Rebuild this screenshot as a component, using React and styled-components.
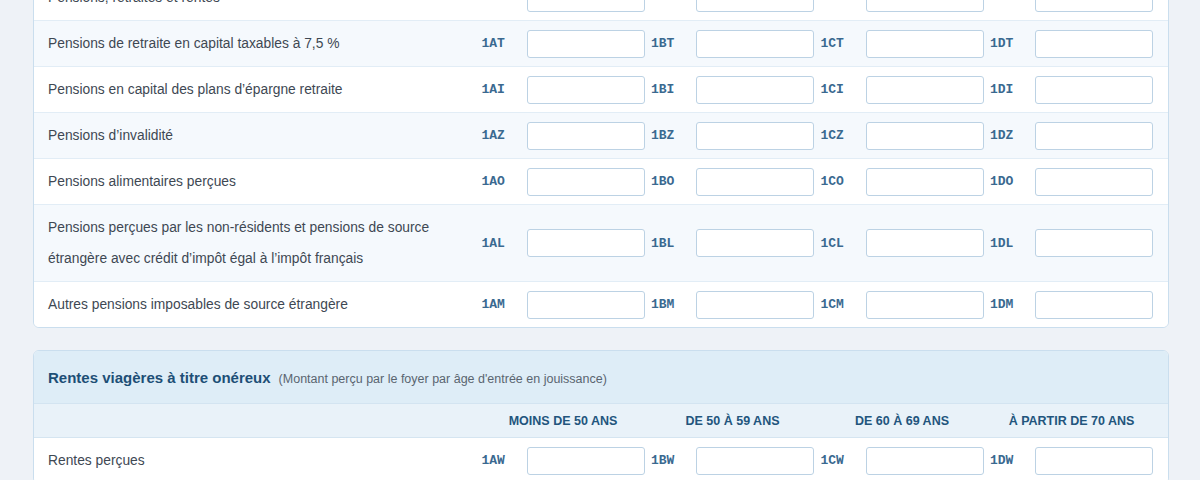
import React from "react";
import styled, { createGlobalStyle } from "styled-components";

const GlobalStyle = createGlobalStyle`
  html, body {
    margin: 0;
    padding: 0;
    background: #eef2f7;
    overflow: hidden;
  }
  body {
    font-family: "Liberation Sans", Arial, sans-serif;
  }
`;

const Page = styled.div`
  padding: 0 31px 0 33px;
  margin-top: -26px;
  display: flex;
  flex-direction: column;
  gap: 22px;
`;

const Card = styled.section`
  background: #ffffff;
  border: 1px solid #cadeee;
  border-radius: 6px;
  overflow: hidden;
`;

const CardHeader = styled.header`
  display: flex;
  align-items: baseline;
  gap: 8px;
  background: #deedf7;
  padding: 18px 14px 17px;
  border-bottom: 1px solid #d3e4f1;
`;

const Title = styled.h3`
  margin: 0;
  font-size: 15px;
  font-weight: 700;
  color: #1d4f76;
`;

const Subtitle = styled.span`
  font-size: 12.5px;
  color: #5a6570;
`;

const Row = styled.div`
  display: flex;
  align-items: center;
  padding: 7px 15px 7px 14px;
  background: ${(p) => (p.$alt ? "#f5f9fd" : "#ffffff")};
  border-bottom: ${(p) => (p.$last ? "none" : "1px solid #e2edf6")};
`;

const HeadRow = styled.div`
  display: flex;
  align-items: center;
  padding: 0 15px 0 14px;
  height: 33px;
  background: #e9f2f9;
  border-bottom: 1px solid #d5e5f1;
`;

const Label = styled.div`
  flex: 1;
  min-width: 0;
  padding-right: 30px;
  font-size: 13.8px;
  line-height: 31px;
  color: #3e4853;
`;

const Fields = styled.div`
  display: grid;
  grid-template-columns: repeat(4, 163px);
  column-gap: 6.5px;
`;

const Field = styled.label`
  display: flex;
  align-items: center;
`;

const Code = styled.span`
  width: 45px;
  flex: none;
  font-family: "Liberation Mono", "Courier New", monospace;
  font-weight: 700;
  font-size: 13px;
  color: #3a6990;
`;

const AmountInput = styled.input`
  width: 118px;
  height: 28px;
  box-sizing: border-box;
  border: 1px solid #bcd2e4;
  border-radius: 3px;
  background: #ffffff;
  padding: 0 6px;
  font: 13px "Liberation Sans", Arial, sans-serif;
  color: #3e4853;
`;

const ColHead = styled.div`
  text-align: center;
  font-size: 12.5px;
  font-weight: 700;
  text-transform: uppercase;
  color: #22557d;
`;

// The summary row carries inputs only; the detailed rows carry box codes.
const pensionRows = [
  { label: "Pensions, retraites et rentes", suffix: "S", noCode: true },
  { label: "Pensions de retraite en capital taxables à 7,5 %", suffix: "T" },
  { label: "Pensions en capital des plans d’épargne retraite", suffix: "I" },
  { label: "Pensions d’invalidité", suffix: "Z" },
  { label: "Pensions alimentaires perçues", suffix: "O" },
  {
    label:
      "Pensions perçues par les non-résidents et pensions de source étrangère avec crédit d’impôt égal à l’impôt français",
    suffix: "L",
  },
  { label: "Autres pensions imposables de source étrangère", suffix: "M" },
];

const columns = ["A", "B", "C", "D"];

const ageBands = [
  "Moins de 50 ans",
  "De 50 à 59 ans",
  "De 60 à 69 ans",
  "À partir de 70 ans",
];

function FieldGroup({ suffix, noCode }) {
  return (
    <Fields>
      {columns.map((c) => (
        <Field key={c}>
          <Code>{noCode ? "" : `1${c}${suffix}`}</Code>
          <AmountInput type="text" />
        </Field>
      ))}
    </Fields>
  );
}

export default function App() {
  return (
    <>
      <GlobalStyle />
      <Page>
        <Card>
          {pensionRows.map((r, i) => (
            <Row key={r.suffix} $alt={i % 2 === 1} $last={i === pensionRows.length - 1}>
              <Label>{r.label}</Label>
              <FieldGroup suffix={r.suffix} noCode={r.noCode} />
            </Row>
          ))}
        </Card>

        <Card>
          <CardHeader>
            <Title>Rentes viagères à titre onéreux</Title>
            <Subtitle>(Montant perçu par le foyer par âge d'entrée en jouissance)</Subtitle>
          </CardHeader>
          <HeadRow>
            <Label />
            <Fields>
              {ageBands.map((b) => (
                <ColHead key={b}>{b}</ColHead>
              ))}
            </Fields>
          </HeadRow>
          <Row $last>
            <Label>Rentes perçues</Label>
            <FieldGroup suffix="W" />
          </Row>
        </Card>
      </Page>
    </>
  );
}
